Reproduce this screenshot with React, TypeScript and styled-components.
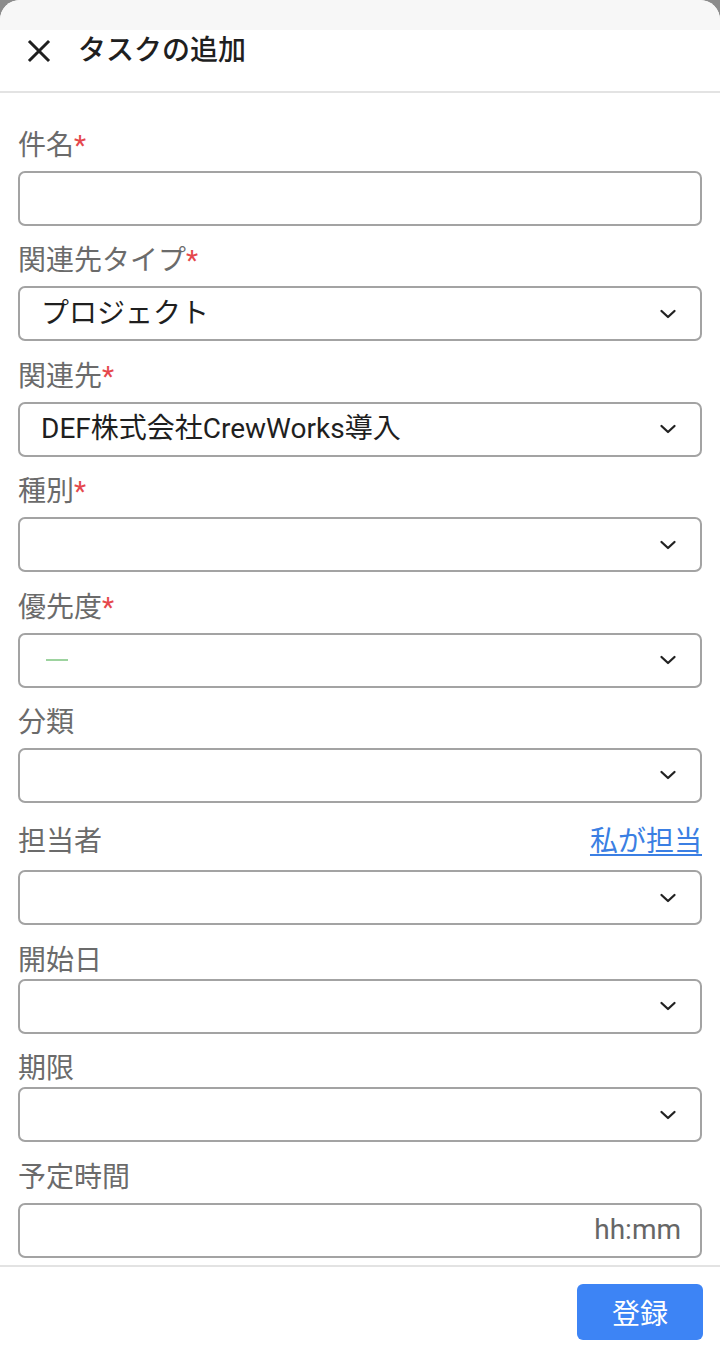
import * as React from "react";
import styled, { createGlobalStyle } from "styled-components";

const Colors = {
  backdrop: "#8c8c8c",
  handle: "#f7f7f7",
  divider: "#e3e3e3",
  label: "#6b6b6b",
  text: "#1f1f1f",
  border: "#a3a3a3",
  required: "#e5484d",
  link: "#3b7fe3",
  primary: "#3d84f5",
};

const GlobalStyle = createGlobalStyle`
  html, body {
    margin: 0;
    padding: 0;
    background: ${Colors.backdrop};
  }
  * {
    box-sizing: border-box;
  }
`;

const Sheet = styled.div`
  height: 1365px;
  display: flex;
  flex-direction: column;
  background: #fff;
  border-radius: 20px 20px 0 0;
  overflow: hidden;
  font-family: Roboto, "Noto Sans CJK JP", sans-serif;
  color: ${Colors.text};
`;

const Handle = styled.div`
  height: 30px;
  flex: none;
  background: ${Colors.handle};
`;

const Header = styled.header`
  flex: none;
  height: 63px;
  display: flex;
  align-items: center;
  gap: 27px;
  padding: 0 0 19px 27px;
  border-bottom: 2px solid ${Colors.divider};
`;

const CloseButton = styled.button`
  width: 24px;
  height: 24px;
  padding: 0;
  border: none;
  background: none;
  display: flex;
  align-items: center;
  justify-content: center;
  color: ${Colors.text};
  cursor: pointer;
`;

const Title = styled.h1`
  margin: 0;
  font-size: 28px;
  line-height: 34px;
  font-weight: 500;
`;

/* ── Form body ── */

const Body = styled.div`
  flex: 1;
  overflow: hidden;
  padding: 36px 18px 0 18px;
  display: flex;
  flex-direction: column;
  gap: 18.4px;
`;

const Field = styled.div`
  display: flex;
  flex-direction: column;
`;

const LabelRow = styled.div<{ $tight?: boolean; $tall?: boolean }>`
  flex: none;
  display: flex;
  align-items: center;
  justify-content: space-between;
  height: ${(p) => (p.$tall ? "41px" : "34px")};
  margin-bottom: ${(p) => (p.$tight ? "1px" : "8px")};
`;

const Label = styled.label`
  font-size: 28px;
  line-height: 34px;
  color: ${Colors.label};
`;

const Required = styled.span`
  color: ${Colors.required};
`;

const AssignLink = styled.a`
  font-size: 28px;
  line-height: 34px;
  color: ${Colors.link};
  text-decoration: underline;
  text-underline-offset: 3px;
  text-decoration-thickness: 2px;
  cursor: pointer;
`;

const Control = styled.div<{ $align?: "left" | "right" }>`
  flex: none;
  height: 55px;
  border: 2px solid ${Colors.border};
  border-radius: 7px;
  display: flex;
  align-items: center;
  justify-content: ${(p) => (p.$align === "right" ? "flex-end" : "space-between")};
  padding: 0 ${(p) => (p.$align === "right" ? "19px" : "22px")} 0 21px;
  font-size: 28px;
  line-height: 34px;
`;

const Value = styled.span`
  white-space: nowrap;
`;

const Placeholder = styled.span`
  color: #666;
`;

const PriorityDash = styled.span`
  display: block;
  width: 22px;
  height: 2px;
  margin-left: 5px;
  background: #9dd39f;
`;

const Chevron = () => (
  <svg width="20" height="20" viewBox="0 0 20 20" fill="none">
    <path d="M3.5 7 L10 13 L16.5 7" stroke="#222" strokeWidth="2.3" strokeLinecap="round" strokeLinejoin="round" />
  </svg>
);

/* ── Footer ── */

const Footer = styled.footer`
  flex: none;
  height: 100px;
  border-top: 2px solid ${Colors.divider};
  display: flex;
  justify-content: flex-end;
  align-items: flex-start;
  padding: 17px 17px 0 0;
`;

const SubmitButton = styled.button`
  width: 126px;
  height: 56px;
  border: none;
  border-radius: 6px;
  background: ${Colors.primary};
  color: #fff;
  font-family: Roboto, "Noto Sans CJK JP", sans-serif;
  font-size: 28px;
  cursor: pointer;
`;

interface ISelectField {
  label: string;
  required?: boolean;
  value?: React.ReactNode;
  tight?: boolean;
}

const SelectField = ({ label, required, value, tight }: ISelectField) => (
  <Field>
    <LabelRow $tight={tight}>
      <Label>
        {label}
        {required && <Required>*</Required>}
      </Label>
    </LabelRow>
    <Control>
      {value ?? <span />}
      <Chevron />
    </Control>
  </Field>
);

export default function App() {
  return (
    <>
      <GlobalStyle />
      <Sheet>
        <Handle />
        <Header>
          <CloseButton aria-label="閉じる">
            <svg width="24" height="24" viewBox="0 0 24 24" fill="none">
              <path d="M3 3 L21 21 M21 3 L3 21" stroke="#1f1f1f" strokeWidth="3" strokeLinecap="square" />
            </svg>
          </CloseButton>
          <Title>タスクの追加</Title>
        </Header>

        <Body>
          <Field>
            <LabelRow>
              <Label>
                件名<Required>*</Required>
              </Label>
            </LabelRow>
            <Control />
          </Field>

          <SelectField label="関連先タイプ" required value={<Value>プロジェクト</Value>} />
          <SelectField label="関連先" required value={<Value>DEF株式会社CrewWorks導入</Value>} />
          <SelectField label="種別" required />
          <SelectField label="優先度" required value={<PriorityDash />} />
          <SelectField label="分類" />

          <Field>
            <LabelRow $tall>
              <Label>担当者</Label>
              <AssignLink>私が担当</AssignLink>
            </LabelRow>
            <Control>
              <span />
              <Chevron />
            </Control>
          </Field>

          <SelectField label="開始日" tight />
          <SelectField label="期限" tight />

          <Field>
            <LabelRow>
              <Label>予定時間</Label>
            </LabelRow>
            <Control $align="right">
              <Placeholder>hh:mm</Placeholder>
            </Control>
          </Field>
        </Body>

        <Footer>
          <SubmitButton>登録</SubmitButton>
        </Footer>
      </Sheet>
    </>
  );
}
